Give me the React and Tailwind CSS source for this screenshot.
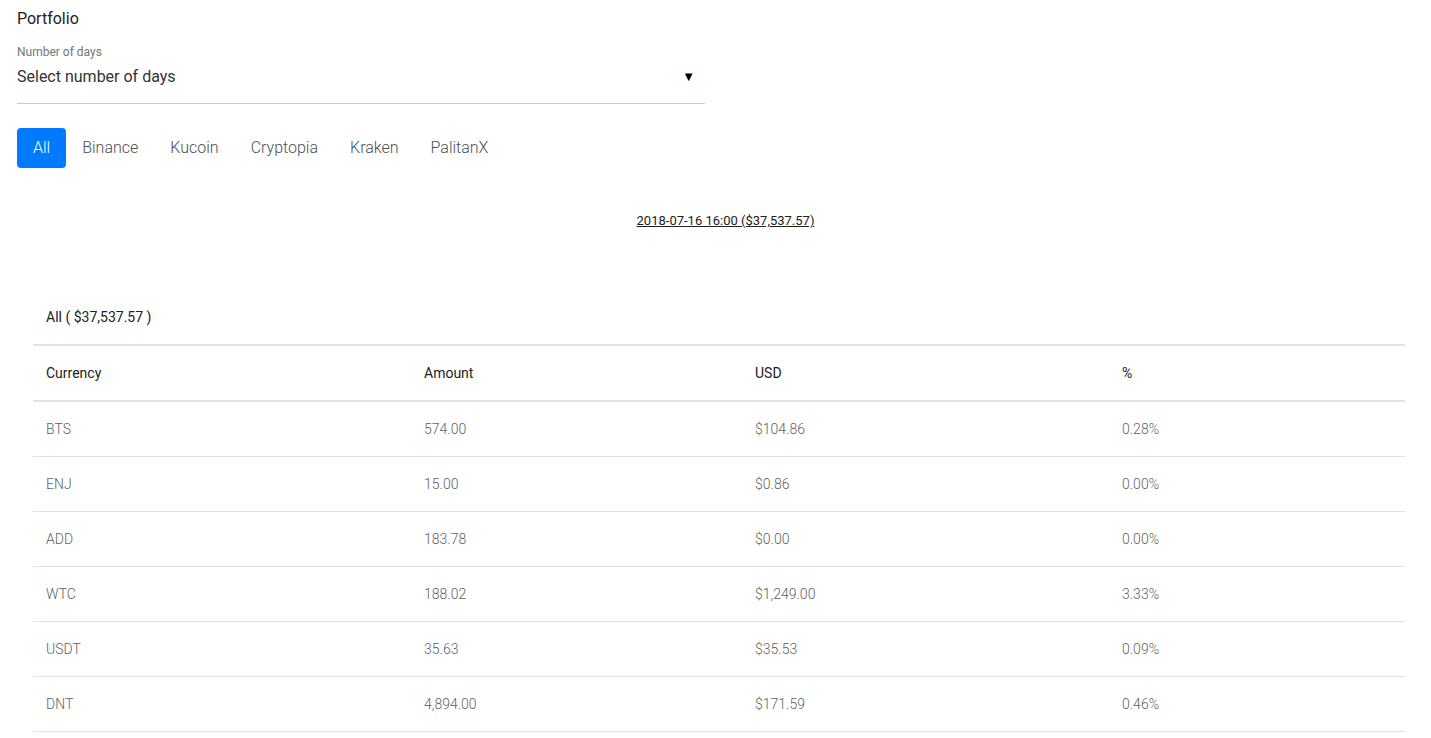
import React from 'react';

const tabs = ['All', 'Binance', 'Kucoin', 'Cryptopia', 'Kraken', 'PalitanX'];

const rows = [
  ['BTS', '574.00', '$104.86', '0.28%'],
  ['ENJ', '15.00', '$0.86', '0.00%'],
  ['ADD', '183.78', '$0.00', '0.00%'],
  ['WTC', '188.02', '$1,249.00', '3.33%'],
  ['USDT', '35.63', '$35.53', '0.09%'],
  ['DNT', '4,894.00', '$171.59', '0.46%'],
];

export default function App() {
  return (
    <div className="min-h-screen bg-white text-[#212529]" style={{ fontFamily: 'Roboto, "Open Sans", sans-serif' }}>
      <div className="px-[17px] pt-[9px]">
        <h1 className="text-[16px] leading-[20px] font-normal text-[#212121]">Portfolio</h1>

        {/* Days select */}
        <div className="w-[688px] mt-[16px]">
          <label className="block text-[12px] leading-[14px] text-[#757575]">Number of days</label>
          <div className="flex items-center justify-between pt-[6px] pb-[14px] leading-[24px] border-b border-[#c8c8c8]">
            <span className="text-[16px] text-[#333333]">Select number of days</span>
            <span className="text-[13px] text-black mr-[10px]">▼</span>
          </div>
        </div>

        {/* Exchange tabs */}
        <div className="flex mt-[24px]">
          {tabs.map((t, i) => (
            <button
              key={t}
              className={
                'h-[40px] px-4 rounded-[4px] text-[16px] font-light ' +
                (i === 0 ? 'bg-[#007bff] text-white' : 'text-[#495057]')
              }
            >
              {t}
            </button>
          ))}
        </div>

        <div className="mt-[42px] pl-[20px] text-center leading-[20px]">
          <a href="#" className="text-[13px] text-[#212121] underline">2018-07-16 16:00 ($37,537.57)</a>
        </div>
      </div>

      {/* Holdings */}
      <div className="px-[33px] mt-[76px] pr-[26px]">
        <div className="px-[13px] text-[14px] leading-[20px] text-[#212121] pb-[17px]">All ( $37,537.57 )</div>
        <table className="w-full text-[14px] border-collapse">
          <thead>
            <tr className="border-t-2 border-b-2 border-[#dee2e6]">
              <th className="w-[378px] h-[56px] px-[13px] pt-[1px] text-left font-normal text-[#212121]">Currency</th>
              <th className="w-[331px] px-[13px] pt-[1px] text-left font-normal text-[#212121]">Amount</th>
              <th className="w-[367px] px-[13px] pt-[1px] text-left font-normal text-[#212121]">USD</th>
              <th className="px-[13px] pt-[1px] text-left font-normal text-[#212121]">%</th>
            </tr>
          </thead>
          <tbody>
            {rows.map((r) => (
              <tr key={r[0]} className="border-b border-[#dee2e6]">
                {r.map((c, j) => (
                  <td key={j} className="h-[55px] px-[13px] pt-[2px] font-light text-[#616161]">{c}</td>
                ))}
              </tr>
            ))}
          </tbody>
        </table>
      </div>
    </div>
  );
}
